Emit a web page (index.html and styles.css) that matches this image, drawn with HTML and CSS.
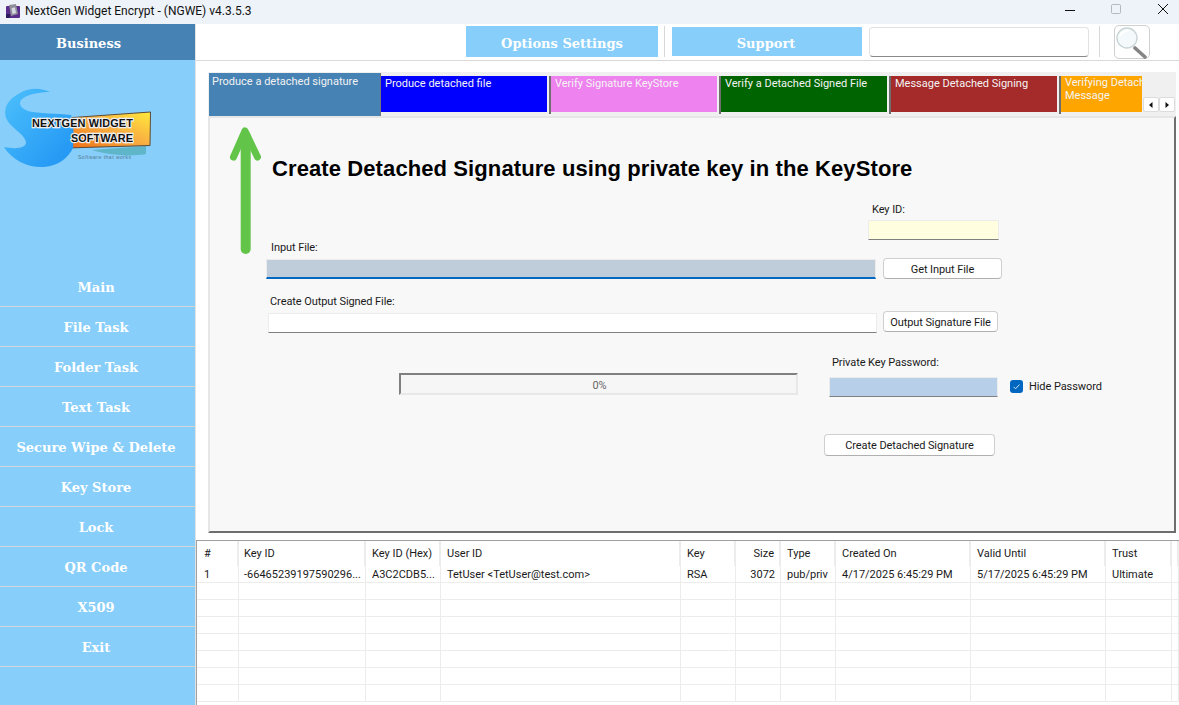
FILE: index.html
```html
<!DOCTYPE html>
<html lang="en">
<head>
<meta charset="utf-8">
<title>NextGen Widget Encrypt</title>
<link rel="stylesheet" href="styles.css">
</head>
<body>
<header class="titlebar">
  <svg class="app-icon" width="16" height="16" viewBox="0 0 16 16"><rect x="1" y="3" width="14" height="12" rx="1" fill="#5a2d8c"/><path d="M4 2L11 1L13 11L6 13Z" fill="#8f8f9a"/><path d="M6.500 5L10 4.500L11 10L7.500 11Z" fill="#d8d8e0"/><rect x="1" y="11" width="4" height="4" fill="#2b1a5e"/></svg>
  <span class="app-title">NextGen Widget Encrypt - (NGWE) v4.3.5.3</span>
  <div class="win-controls">
    <svg width="12" height="12" viewBox="0 0 12 12" class="win-min"><path d="M1 7.500H11" stroke="#111" stroke-width="1"/></svg>
    <svg width="12" height="12" viewBox="0 0 12 12" class="win-max"><rect x="1.500" y="1.500" width="9" height="9" rx="1" fill="none" stroke="#b5b9bd"/></svg>
    <svg width="12" height="12" viewBox="0 0 12 12" class="win-close"><path d="M1 1L11 11M11 1L1 11" stroke="#111" stroke-width="1"/></svg>
  </div>
</header>
<div class="app">
  <aside class="sidebar">
    <div class="side-head">Business</div>
    <div class="logo-area">
      <svg class="logo" width="195" height="207" viewBox="0 60 195 207">
        <defs>
          <linearGradient id="sw" x1="0" y1="0" x2="1" y2="1"><stop offset="0" stop-color="#4cc0fb"/><stop offset="1" stop-color="#1f93f3"/></linearGradient>
          <linearGradient id="sg" x1="1" y1="0" x2="0" y2="1"><stop offset="0" stop-color="#ffe93a"/><stop offset=".45" stop-color="#f9b042"/><stop offset="1" stop-color="#ee6a12"/></linearGradient>
        </defs>
        <path d="M92 150L146 146L146 154C130 157 108 155 92 150Z" fill="#5fb6c9"/>
        <path d="M66 118L150.500 112L150 145.500L66 148Z" fill="url(#sg)" stroke="#5b4a3a" stroke-width="1"/>
        <path d="M50 92C42 88 30 87 20 93C8 99 3 108 6 118C10 128 24 133 26 142C26 149 14 149 4 147C12 160 28 168 44 167C58 166 68 158 73 148C74 138 74 125 71 115C58 113 38 114 28 111C20 108 18 103 22 99C28 94 40 92 50 92Z" fill="url(#sw)"/>
        <text x="32" y="126.500" class="logo-text" textLength="101">NEXTGEN WIDGET</text>
        <text x="71" y="141.500" class="logo-text" textLength="62">SOFTWARE</text>
        <text x="78" y="159" class="logo-tag" textLength="53">Software that works</text>
      </svg>
    </div>
    <nav class="side-nav">
      <a class="nav-item">Main</a>
      <a class="nav-item">File Task</a>
      <a class="nav-item">Folder Task</a>
      <a class="nav-item">Text Task</a>
      <a class="nav-item">Secure Wipe &amp; Delete</a>
      <a class="nav-item">Key Store</a>
      <a class="nav-item">Lock</a>
      <a class="nav-item">QR Code</a>
      <a class="nav-item">X509</a>
      <a class="nav-item">Exit</a>
    </nav>
  </aside>
  <main class="content">
    <div class="topbar">
      <button class="top-btn btn-options">Options Settings</button>
      <span class="top-sep"></span>
      <button class="top-btn btn-support">Support</button>
      <input class="search-input" type="text">
      <span class="top-sep sep-search"></span>
      <button class="search-btn" aria-label="Search">
        <svg width="36" height="34" viewBox="0 0 36 34">
          <path d="M21 23L31 32" stroke="#858585" stroke-width="3.600" stroke-linecap="round"/>
          <circle cx="13" cy="13" r="10" fill="#f4fafb" stroke="#c9d4d6" stroke-width="1.400"/>
          <path d="M6 11C8 7 11 5.500 15 5.500" fill="none" stroke="#ffffff" stroke-width="2"/>
        </svg>
      </button>
    </div>
    <div class="work">
      <div class="tabstrip">
        <div class="tabs">
          <div class="tab-active">Produce a detached signature</div>
          <div class="tab"><div class="tab-fill fill-blue">Produce detached file</div></div>
          <div class="tab"><div class="tab-fill fill-orchid">Verify Signature KeyStore</div></div>
          <div class="tab"><div class="tab-fill fill-green">Verify a Detached Signed File</div></div>
          <div class="tab"><div class="tab-fill fill-brown">Message Detached Signing</div></div>
          <div class="tab"><div class="tab-fill fill-orange">Verifying Detached<br>Message</div></div>
        </div>
        <div class="tab-scroll">
          <span class="scroll-btn"><svg width="8" height="8" viewBox="0 0 8 8"><path d="M5.500 1V7L2 4Z" fill="#111"/></svg></span>
          <span class="scroll-btn"><svg width="8" height="8" viewBox="0 0 8 8"><path d="M2.500 1V7L6 4Z" fill="#111"/></svg></span>
        </div>
      </div>
      <section class="panel">
        <svg class="arrow" width="44" height="134" viewBox="0 0 44 134"><path d="M21.700 12V125" fill="none" stroke="#62c54a" stroke-width="10" stroke-linecap="round"/><path d="M9.500 33L21 7L33.500 33" fill="none" stroke="#62c54a" stroke-width="7" stroke-linecap="round" stroke-linejoin="round"/></svg>
        <h1 class="panel-title">Create Detached Signature using private key in the KeyStore</h1>
        <div class="keyid-field">
          <label class="field-label keyid-label">Key ID:</label>
          <input class="field keyid-input" type="text">
        </div>
        <label class="field-label input-label">Input File:</label>
        <div class="file-row input-row">
          <input class="field input-file" type="text">
          <button class="win-btn btn-input">Get Input File</button>
        </div>
        <label class="field-label output-label">Create Output Signed File:</label>
        <div class="file-row output-row">
          <input class="field output-file" type="text">
          <button class="win-btn btn-output">Output Signature File</button>
        </div>
        <div class="progress-row">
          <div class="progress">0%</div>
          <div class="password-col">
            <label class="field-label password-label">Private Key Password:</label>
            <div class="password-row">
              <input class="field password-input" type="text">
              <span class="check"><svg width="13" height="13" viewBox="0 0 13 13"><path d="M3.500 6.800L5.500 8.800L9.500 4.500" fill="none" stroke="#cfe2f5" stroke-width="1"/></svg></span>
              <span class="check-label">Hide Password</span>
            </div>
          </div>
        </div>
        <button class="win-btn btn-create">Create Detached Signature</button>
      </section>
    </div>
    <div class="grid-wrap">
      <table class="keys">
        <colgroup><col class="c1"><col class="c2"><col class="c3"><col class="c4"><col class="c5"><col class="c6"><col class="c7"><col class="c8"><col class="c9"><col class="c10"><col></colgroup>
        <thead><tr><th class="first">#</th><th class="second">Key ID</th><th>Key ID (Hex)</th><th>User ID</th><th>Key</th><th class="num">Size</th><th>Type</th><th>Created On</th><th>Valid Until</th><th>Trust</th><th></th></tr></thead>
        <tbody>
          <tr><td class="first">1</td><td class="second">-66465239197590296...</td><td>A3C2CDB5...</td><td>TetUser &lt;TetUser@test.com&gt;</td><td>RSA</td><td class="num">3072</td><td>pub/priv</td><td>4/17/2025 6:45:29 PM</td><td>5/17/2025 6:45:29 PM</td><td>Ultimate</td><td></td></tr>
          <tr><td></td><td></td><td></td><td></td><td></td><td></td><td></td><td></td><td></td><td></td><td></td></tr>
          <tr><td></td><td></td><td></td><td></td><td></td><td></td><td></td><td></td><td></td><td></td><td></td></tr>
          <tr><td></td><td></td><td></td><td></td><td></td><td></td><td></td><td></td><td></td><td></td><td></td></tr>
          <tr><td></td><td></td><td></td><td></td><td></td><td></td><td></td><td></td><td></td><td></td><td></td></tr>
          <tr><td></td><td></td><td></td><td></td><td></td><td></td><td></td><td></td><td></td><td></td><td></td></tr>
          <tr><td></td><td></td><td></td><td></td><td></td><td></td><td></td><td></td><td></td><td></td><td></td></tr>
          <tr><td></td><td></td><td></td><td></td><td></td><td></td><td></td><td></td><td></td><td></td><td></td></tr>
        </tbody>
      </table>
    </div>
  </main>
</div>
</body>
</html>
```
FILE: styles.css
```css
* { box-sizing: border-box; }
html, body { margin: 0; height: 705px; overflow: hidden; }
body { font-family: Roboto, "Liberation Sans", sans-serif; font-size: 11px; color: #1a1a1a; background: #fff; display: flex; flex-direction: column; }

.titlebar { height: 24px; flex: none; background: #edf3f8; display: flex; align-items: center; padding-left: 5px; }
.app-icon { margin-top: -2px; }
.app-title { margin-left: 4px; font-size: 12px; color: #111; margin-top: -2px; }
.win-controls { margin-left: auto; display: flex; align-items: center; margin-top: -6px; padding-right: 10px; }
.win-max { margin-left: 34px; }
.win-close { margin-left: 35px; }

.app { flex: 1; display: flex; min-height: 0; }

.sidebar { width: 196px; flex: none; background: #87cefa; border-right: 1px solid #e3e3e3; display: flex; flex-direction: column; }
.side-head { height: 36px; background: #4682b4; color: #fff; font: bold 13px "DejaVu Serif", serif; display: flex; align-items: center; justify-content: center; padding: 3px 18px 0 0; }
.logo-area { height: 207px; flex: none; }
.logo { display: block; }
.logo-text { font: bold 11px "Liberation Sans", sans-serif; fill: #111; stroke: #eeeeee; stroke-width: 2.400px; paint-order: stroke; }
.logo-tag { font: 5px "Liberation Sans", sans-serif; fill: #55788f; }
.side-nav { display: flex; flex-direction: column; }
.nav-item { height: 40px; border-bottom: 1px solid #d5d5d5; color: #fff; font: bold 13px "DejaVu Serif", serif; display: flex; align-items: center; justify-content: center; padding: 1px 3px 0 0; }

.content { flex: 1; min-width: 0; display: flex; flex-direction: column; }

.topbar { height: 37px; flex: none; border-bottom: 1px solid #d9d9d9; display: flex; align-items: center; padding-left: 270px; padding-bottom: 1px; }
.top-btn { border: 0; background: #87cefa; color: #fff; font: bold 13px "DejaVu Serif", serif; padding: 3px 0 0; }
.btn-options { width: 192px; height: 31px; }
.top-sep { width: 1px; height: 31px; background: #d8d8d8; margin: 0 7px 0 6px; }
.btn-support { width: 190px; height: 29px; padding-right: 2px; }
.search-input { width: 220px; height: 30px; margin-left: 7px; border: 1px solid #e2e2e2; border-bottom-color: #8a8a8a; border-radius: 4px; background: #fff; }
.sep-search { margin: 0 14px 0 10px; }
.search-btn { width: 36px; height: 34px; padding: 0; border: 1px solid #d0d0d0; border-radius: 5px; background: #fff; }
.search-btn svg { display: block; margin: -1px; }

.work { height: 479px; flex: none; padding: 11px 3px 0 12px; background: #fff; }
.tabstrip { height: 44px; background: #f0f0f0; display: flex; }
.tabs { width: 934px; flex: none; display: flex; overflow: hidden; padding-left: 1px; }
.tab-active { width: 172px; flex: none; height: 43px; margin-top: 1px; padding: 2px 3px; background: #4682b4; color: #f2f2f2; border-right: 1px solid #777; line-height: 14px; }
.tab { width: 170px; flex: none; height: 38px; margin-top: 4px; padding-right: 2px; border-right: 2px solid #6e6e6e; }
.tab:last-child { border-right: 0; }
.tab-fill { height: 36px; padding: 1px 4px; line-height: 13px; color: #f4f4f4; white-space: nowrap; }
.fill-blue { background: #0000ff; }
.fill-orchid { background: #ee82ee; }
.fill-green { background: #006400; }
.fill-brown { background: #a52a2a; }
.fill-orange { background: #ffa500; line-height: 12.500px; }
.tab-scroll { display: flex; margin: 25px 0 0 1px; height: 14px; }
.scroll-btn { width: 16px; height: 15px; background: #fff; border: 1px solid #dcdcdc; border-radius: 2px; display: flex; align-items: center; justify-content: center; }

.panel { position: relative; height: 417px; background: #f8f8f8; border: 2px solid #e6e6e6; border-right-color: #6e6e6e; border-bottom-color: #6e6e6e; }
.arrow { position: absolute; left: 14px; top: 6px; }
.panel-title { margin: 39px 0 0 62px; font: bold 22px/24px "Liberation Sans", sans-serif; letter-spacing: .1px; color: #000; white-space: nowrap; }
.field-label { display: block; line-height: 14px; color: #1a1a1a; white-space: nowrap; letter-spacing: -.08px; }
.field { display: block; padding: 0; border: 1px solid #ececec; border-bottom-color: #808080; background: #fff; }
.keyid-field { margin: 22px 0 0 658px; width: 131px; }
.keyid-label { margin-left: 4px; }
.keyid-input { margin-top: 3px; width: 131px; height: 20px; background: #ffffe0; }
.input-label { margin: 1px 0 0 61px; }
.file-row { display: flex; align-items: flex-start; }
.input-row { margin-top: 3px; padding-left: 56px; }
.input-file { width: 610px; height: 20px; margin-top: 1px; background: #bfccd9; border-bottom: 2px solid #0067c0; }
.win-btn { background: #fff; border: 1px solid #cfcfcf; border-bottom-color: #b0b0b0; border-radius: 4px; font: 11px Roboto, "Liberation Sans", sans-serif; letter-spacing: -.08px; color: #1a1a1a; padding: 1px 0 0; }
.btn-input { width: 119px; height: 21px; margin-left: 7px; }
.output-label { margin: 16px 0 0 60px; }
.output-row { margin-top: 2px; padding-left: 58px; }
.output-file { width: 609px; height: 20px; margin-top: 2px; }
.btn-output { width: 115px; height: 21px; margin-left: 6px; }
.progress-row { display: flex; margin: 23px 0 0 189px; }
.progress { width: 399px; height: 22px; margin-top: 17px; border: 2px solid #e8e8e8; border-top-color: #808080; border-left-color: #808080; background: #f6f6f6; color: #666; text-align: center; line-height: 21px; font-size: 11px; padding-left: 2px; }
.password-col { margin-left: 30px; }
.password-label { margin-left: 4px; }
.password-row { display: flex; align-items: center; margin-top: 7px; }
.password-input { width: 169px; height: 20px; margin-left: 1px; background: #b8cfea; }
.check { width: 13px; height: 13px; margin: 0 0 2px 12px; border-radius: 3px; background: #0067c0; display: block; flex: none; }
.check svg { display: block; }
.check-label { margin: 0 0 2px 6px; white-space: nowrap; letter-spacing: -.08px; }
.btn-create { display: block; width: 171px; height: 22px; margin: 37px 0 0 614px; }

.grid-wrap { flex: 1; min-height: 0; overflow: hidden; border-top: 1px solid #a0a0a0; border-left: 1px solid #a0a0a0; background: #fff; }
.keys { width: 982px; table-layout: fixed; border-collapse: separate; border-spacing: 0; }
.c1 { width: 42px; } .c2 { width: 127px; } .c3 { width: 75px; } .c4 { width: 240px; } .c5 { width: 55px; }
.c6 { width: 45px; } .c7 { width: 55px; } .c8 { width: 135px; } .c9 { width: 135px; } .c10 { width: 66px; }
.keys th, .keys td { padding: 0 0 0 6px; text-align: left; font-weight: 400; white-space: nowrap; overflow: hidden; }
.keys th { height: 25px; border-right: 2px solid #ececec; vertical-align: middle; }
.keys td { height: 17px; padding-top: 2px; line-height: 14px; border-right: 1px solid #ececec; border-bottom: 1px solid #ececec; }
.keys .first { padding-left: 7px; }
.keys .second { padding-left: 5px; }
.keys .num { text-align: right; padding-right: 5px; padding-left: 0; }
```
